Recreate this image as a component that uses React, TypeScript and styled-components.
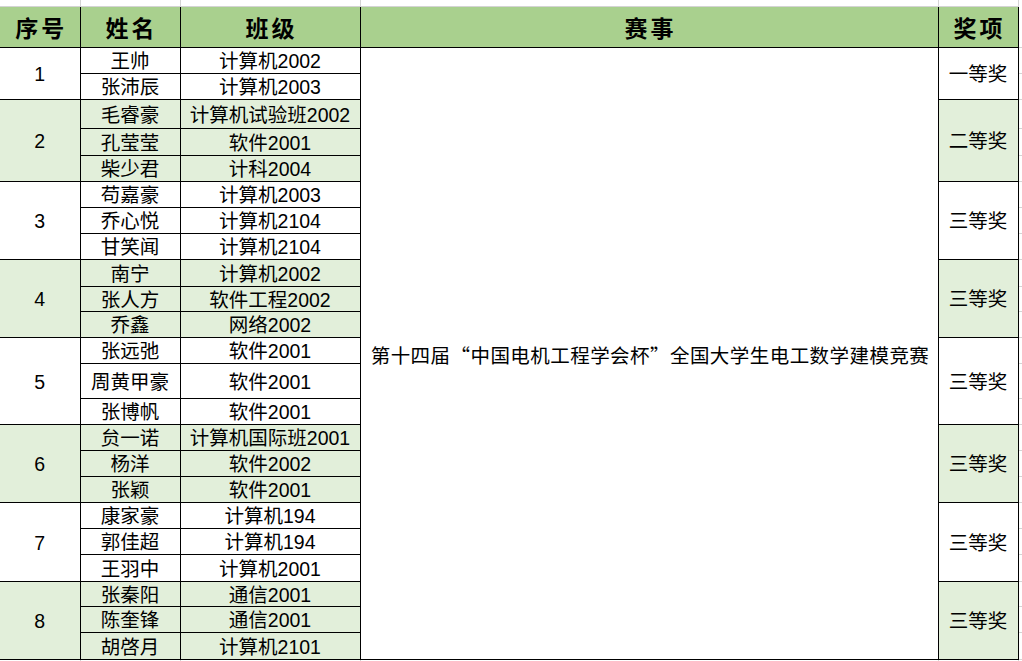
import React from 'react';
import styled, { createGlobalStyle } from 'styled-components';

const GlobalStyle = createGlobalStyle`
  html, body {
    margin: 0;
    padding: 0;
    background: #ffffff;
    overflow: hidden;
  }
  body {
    font-family: "Liberation Sans", "Noto Sans CJK SC", sans-serif;
    color: #000000;
  }
`;

const GRID = '#d4d4d4';
const INK = '#000000';

const Sheet = styled.table`
  border-collapse: collapse;
  table-layout: fixed;
  width: 1028px;
  font-size: 19.5px;
  line-height: 20px;
`;

const Col = styled.col<{ $w: number }>`
  width: ${(p) => p.$w}px;
`;

const GutterRow = styled.tr`
  height: 6px;
`;

const GutterCell = styled.td`
  padding: 0;
  border-left: 1px solid ${GRID};
  border-right: 1px solid ${GRID};
  &:first-child {
    border-left: none;
  }
`;

const HeadRow = styled.tr`
  height: 41px;
`;

const HeadCell = styled.th`
  padding: 0 0 0 3px;
  background: #a9d08e;
  border: 1px solid ${INK};
  border-top: 1px solid ${GRID};
  font-family: "Noto Sans CJK SC", sans-serif;
  font-size: 23px;
  font-weight: 700;
  letter-spacing: 3px;
  text-align: center;
  vertical-align: middle;
  white-space: nowrap;
  &:first-child {
    border-left: none;
  }
`;

const BodyRow = styled.tr<{ $h: number }>`
  height: ${(p) => p.$h}px;
`;

const Cell = styled.td<{ $shade: boolean }>`
  padding: 2px 0 0 0;
  background: ${(p) => (p.$shade ? '#e2efda' : '#ffffff')};
  border: 1px solid ${INK};
  text-align: center;
  vertical-align: middle;
  white-space: nowrap;
`;

const NoCell = styled(Cell)`
  border-left: none;
`;

const EventCell = styled.td`
  padding: 3px 0 0 2px;
  background: #ffffff;
  border: 1px solid ${INK};
  font-family: "Noto Sans CJK SC", sans-serif;
  letter-spacing: 0.45px;
  text-align: center;
  vertical-align: middle;
  white-space: nowrap;
`;

const SpillCell = styled.td`
  padding: 0;
  border-bottom: 1px solid ${GRID};
`;

const TailRow = styled.tr`
  height: 4px;
`;

type Group = {
  no: number;
  award: string;
  members: [string, string][];
  heights: number[];
};

const groups: Group[] = [
  { no: 1, award: '一等奖', members: [['王帅', '计算机2002'], ['张沛辰', '计算机2003']], heights: [26, 26] },
  {
    no: 2,
    award: '二等奖',
    members: [['毛睿豪', '计算机试验班2002'], ['孔莹莹', '软件2001'], ['柴少君', '计科2004']],
    heights: [29, 27, 26],
  },
  {
    no: 3,
    award: '三等奖',
    members: [['苟嘉豪', '计算机2003'], ['乔心悦', '计算机2104'], ['甘笑闻', '计算机2104']],
    heights: [26, 26, 26],
  },
  {
    no: 4,
    award: '三等奖',
    members: [['南宁', '计算机2002'], ['张人方', '软件工程2002'], ['乔鑫', '网络2002']],
    heights: [27, 25, 26],
  },
  {
    no: 5,
    award: '三等奖',
    members: [['张远弛', '软件2001'], ['周黄甲豪', '软件2001'], ['张博帆', '软件2001']],
    heights: [26, 35, 26],
  },
  {
    no: 6,
    award: '三等奖',
    members: [['贠一诺', '计算机国际班2001'], ['杨洋', '软件2002'], ['张颖', '软件2001']],
    heights: [26, 26, 26],
  },
  {
    no: 7,
    award: '三等奖',
    members: [['康家豪', '计算机194'], ['郭佳超', '计算机194'], ['王羽中', '计算机2001']],
    heights: [26, 26, 27],
  },
  {
    no: 8,
    award: '三等奖',
    members: [['张秦阳', '通信2001'], ['陈奎锋', '通信2001'], ['胡啓月', '计算机2101']],
    heights: [25, 26, 27],
  },
];

const EVENT = '第十四届“中国电机工程学会杯”全国大学生电工数学建模竞赛';
const totalRows = groups.reduce((n, g) => n + g.members.length, 0);
const widths = [80, 100, 180, 578, 80, 10];

export default function App() {
  return (
    <>
      <GlobalStyle />
      <Sheet>
        <colgroup>
          {widths.map((w, i) => (
            <Col key={i} $w={w} />
          ))}
        </colgroup>
        <tbody>
          <GutterRow>
            {widths.map((_, i) => (
              <GutterCell key={i} />
            ))}
          </GutterRow>
          <HeadRow>
            <HeadCell>序号</HeadCell>
            <HeadCell>姓名</HeadCell>
            <HeadCell>班级</HeadCell>
            <HeadCell>赛事</HeadCell>
            <HeadCell>奖项</HeadCell>
            <SpillCell />
          </HeadRow>
          {groups.map((g, gi) => {
            const shade = g.no % 2 === 0;
            return g.members.map(([name, cls], mi) => (
              <BodyRow key={`${g.no}-${mi}`} $h={g.heights[mi]}>
                {mi === 0 && (
                  <NoCell $shade={shade} rowSpan={g.members.length}>
                    {g.no}
                  </NoCell>
                )}
                <Cell $shade={shade}>{name}</Cell>
                <Cell $shade={shade}>{cls}</Cell>
                {gi === 0 && mi === 0 && <EventCell rowSpan={totalRows}>{EVENT}</EventCell>}
                {mi === 0 && (
                  <Cell $shade={shade} rowSpan={g.members.length}>
                    {g.award}
                  </Cell>
                )}
                <SpillCell />
              </BodyRow>
            ));
          })}
          <TailRow>
            {widths.map((_, i) => (
              <GutterCell key={i} />
            ))}
          </TailRow>
        </tbody>
      </Sheet>
    </>
  );
}
